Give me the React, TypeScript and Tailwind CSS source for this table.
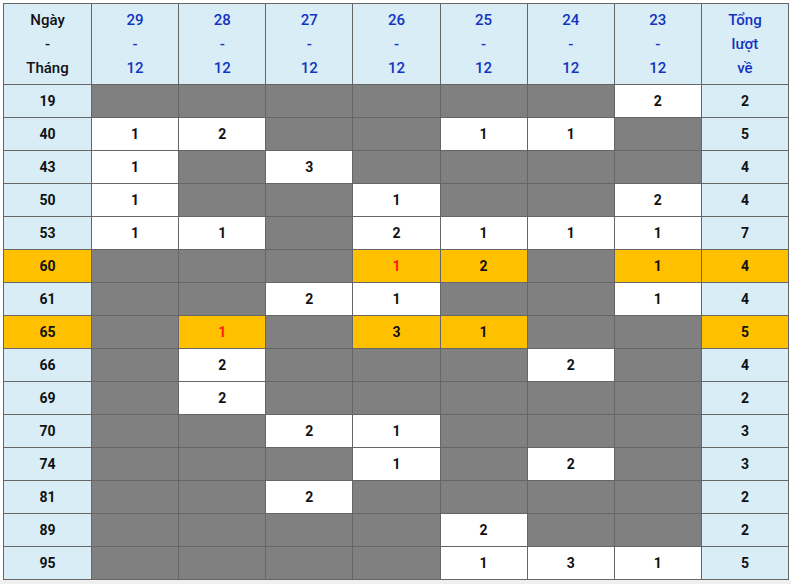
type Cell = number | null

interface Row {
  num: string
  hot?: boolean
  cells: Cell[]
  total: number
  red?: number[]
}

const dates = ['29', '28', '27', '26', '25', '24', '23']

const rows: Row[] = [
  { num: '19', cells: [null, null, null, null, null, null, 2], total: 2 },
  { num: '40', cells: [1, 2, null, null, 1, 1, null], total: 5 },
  { num: '43', cells: [1, null, 3, null, null, null, null], total: 4 },
  { num: '50', cells: [1, null, null, 1, null, null, 2], total: 4 },
  { num: '53', cells: [1, 1, null, 2, 1, 1, 1], total: 7 },
  { num: '60', hot: true, cells: [null, null, null, 1, 2, null, 1], total: 4, red: [3] },
  { num: '61', cells: [null, null, 2, 1, null, null, 1], total: 4 },
  { num: '65', hot: true, cells: [null, 1, null, 3, 1, null, null], total: 5, red: [1] },
  { num: '66', cells: [null, 2, null, null, null, 2, null], total: 4 },
  { num: '69', cells: [null, 2, null, null, null, null, null], total: 2 },
  { num: '70', cells: [null, null, 2, 1, null, null, null], total: 3 },
  { num: '74', cells: [null, null, null, 1, null, 2, null], total: 3 },
  { num: '81', cells: [null, null, 2, null, null, null, null], total: 2 },
  { num: '89', cells: [null, null, null, null, 2, null, null], total: 2 },
  { num: '95', cells: [null, null, null, null, 1, 3, 1], total: 5 },
]

function App(): React.JSX.Element {
  return (
    <div className="h-screen bg-[#efefef]" style={{ fontFamily: 'Roboto, "Liberation Sans", sans-serif' }}>
      <div className="bg-white h-[580px] pt-[3px] pl-[3px]">
        <table className="table-fixed border-collapse w-[786px] text-[14px] font-bold text-[#111]">
          <thead>
            <tr className="h-[81px] bg-[#d9edf7]">
              <th className="border border-[#666] font-medium text-[15px] leading-[24px] text-[#111] w-[88px]">
                Ngày<br />-<br />Tháng
              </th>
              {dates.map((d) => (
                <th key={d} className="border border-[#666] font-medium text-[15px] leading-[24px] text-[#1234c0]">
                  {d}<br />-<br />12
                </th>
              ))}
              <th className="border border-[#666] font-medium text-[15px] leading-[24px] text-[#1234c0]">
                Tổng<br />lượt<br />về
              </th>
            </tr>
          </thead>
          <tbody>
            {rows.map((r) => (
              <tr key={r.num} className="h-[33px]">
                <td className={`border border-[#666] text-center ${r.hot ? 'bg-[#ffc000]' : 'bg-[#d9edf7]'}`}>{r.num}</td>
                {r.cells.map((c, i) => {
                  let bg = 'bg-white'
                  if (c === null) bg = 'bg-[#808080]'
                  else if (r.hot) bg = 'bg-[#ffc000]'
                  const red = r.red?.includes(i)
                  return (
                    <td key={i} className={`border border-[#666] text-center ${bg} ${red ? 'text-[#ff1a1a]' : ''}`}>
                      {c ?? ''}
                    </td>
                  )
                })}
                <td className={`border border-[#666] text-center ${r.hot ? 'bg-[#ffc000]' : 'bg-[#d9edf7]'}`}>{r.total}</td>
              </tr>
            ))}
          </tbody>
        </table>
      </div>
    </div>
  )
}

export default App
